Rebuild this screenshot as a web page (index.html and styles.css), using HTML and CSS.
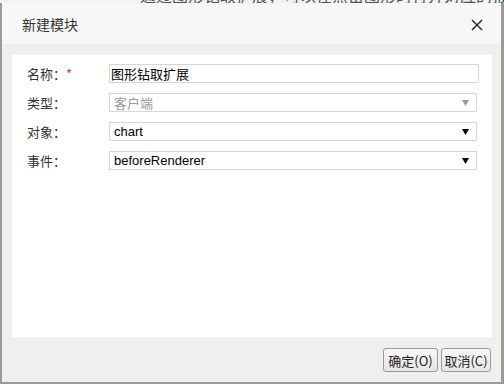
FILE: index.html
```html
<!DOCTYPE html>
<html lang="zh-CN">
<head>
    <meta charset="UTF-8">
    <title>新建模块</title>
    <link rel="stylesheet" href="styles.css">
</head>
<body>
    <div class="backdrop">
        <p class="backdrop-text">通过图形钻取扩展，可以在点击图形时打开对应的报表，进行数据的深入分析</p>
    </div>

    <div class="dialog">
        <!-- Header -->
        <div class="dialog-head">
            <span class="dialog-title">新建模块</span>
            <svg class="close-icon" width="12" height="12" viewBox="0 0 12 12">
                <path d="M1 1 L11 11 M11 1 L1 11" stroke="#333" stroke-width="1.6" fill="none"/>
            </svg>
        </div>

        <!-- Form -->
        <div class="dialog-body">
            <div class="form-row">
                <label class="form-label">名称：<span class="required">*</span></label>
                <div class="field field-input">图形钻取扩展</div>
            </div>
            <div class="form-row">
                <label class="form-label">类型：</label>
                <div class="field field-select disabled">
                    <span>客户端</span>
                    <svg class="arrow" width="7" height="6" viewBox="0 0 7 6"><polygon points="0,0 7,0 3.5,6"/></svg>
                </div>
            </div>
            <div class="form-row">
                <label class="form-label">对象：</label>
                <div class="field field-select">
                    <span>chart</span>
                    <svg class="arrow" width="7" height="6" viewBox="0 0 7 6"><polygon points="0,0 7,0 3.5,6"/></svg>
                </div>
            </div>
            <div class="form-row">
                <label class="form-label">事件：</label>
                <div class="field field-select">
                    <span>beforeRenderer</span>
                    <svg class="arrow" width="7" height="6" viewBox="0 0 7 6"><polygon points="0,0 7,0 3.5,6"/></svg>
                </div>
            </div>
        </div>

        <!-- Footer -->
        <div class="dialog-foot">
            <button class="btn btn-ok">确定(O)</button>
            <button class="btn btn-cancel">取消(C)</button>
        </div>
    </div>
</body>
</html>
```

FILE: styles.css
```css
body {
    margin: 0;
    padding: 0;
    width: 504px;
    height: 384px;
    overflow: hidden;
    background: #9b9b9b;
    font-family: 'Liberation Sans', 'Noto Sans CJK SC', sans-serif;
    color: #333;
    position: relative;
}
.backdrop {
    height: 3px;
    background: #f2f2f2;
    overflow: hidden;
    position: relative;
}
.backdrop-text {
    margin: 0;
    position: absolute;
    left: 140px;
    top: -13px;
    font-size: 16px;
    line-height: 16px;
    white-space: nowrap;
    color: #4a5563;
    font-family: 'Noto Sans CJK SC', sans-serif;
}
.dialog {
    position: absolute;
    left: 2px;
    top: 3px;
    width: 499px;
    height: 379px;
    background: #f0efee;
    display: flex;
    flex-direction: column;
}
.dialog-head {
    height: 41px;
    flex: none;
    background: #f7f7f7;
    display: flex;
    align-items: center;
    justify-content: space-between;
    padding: 0 18px 0 20px;
}
.dialog-title {
    font-family: 'Noto Sans CJK SC', sans-serif;
    font-size: 14px;
    color: #333;
    margin-top: 1px;
}
.close-icon {
    margin-top: 3px;
}
.dialog-body {
    margin: 11px 9px 0 10px;
    height: 282px;
    background: #fff;
    padding: 9px 13px 0 15px;
    box-sizing: border-box;
    display: flex;
    flex-direction: column;
    gap: 10px;
}
.form-row {
    display: flex;
    align-items: center;
    height: 19px;
}
.form-label {
    width: 82px;
    flex: none;
    font-family: 'Noto Sans CJK SC', sans-serif;
    font-size: 13px;
    color: #333;
}
.required {
    color: #e4393c;
}
.field {
    flex: 1;
    height: 19px;
    box-sizing: border-box;
    border: 1px solid #d8d6d2;
    font-size: 13px;
    line-height: 17px;
    color: #000;
    white-space: nowrap;
}
.field-input {
    padding-left: 1px;
    font-family: 'Noto Sans CJK SC', sans-serif;
}
.field-select {
    margin-right: 2px;
    padding: 0 7px 0 4px;
    display: flex;
    align-items: center;
    justify-content: space-between;
}
.field-select .arrow {
    fill: #000;
}
.field-select.disabled {
    color: #999;
    font-family: 'Noto Sans CJK SC', sans-serif;
}
.field-select.disabled .arrow {
    fill: #999;
}
.dialog-foot {
    display: flex;
    justify-content: flex-end;
    gap: 3px;
    padding: 11px 10px 0 0;
}
.btn {
    height: 24px;
    padding: 0;
    border: 1px solid #8d9bad;
    border-radius: 3px;
    background: linear-gradient(#f7f7f7, #e6e6e6);
    font-family: 'Noto Sans CJK SC', sans-serif;
    font-size: 13px;
    color: #222;
    cursor: pointer;
}
.btn-ok {
    width: 55px;
}
.btn-cancel {
    width: 50px;
}
```
